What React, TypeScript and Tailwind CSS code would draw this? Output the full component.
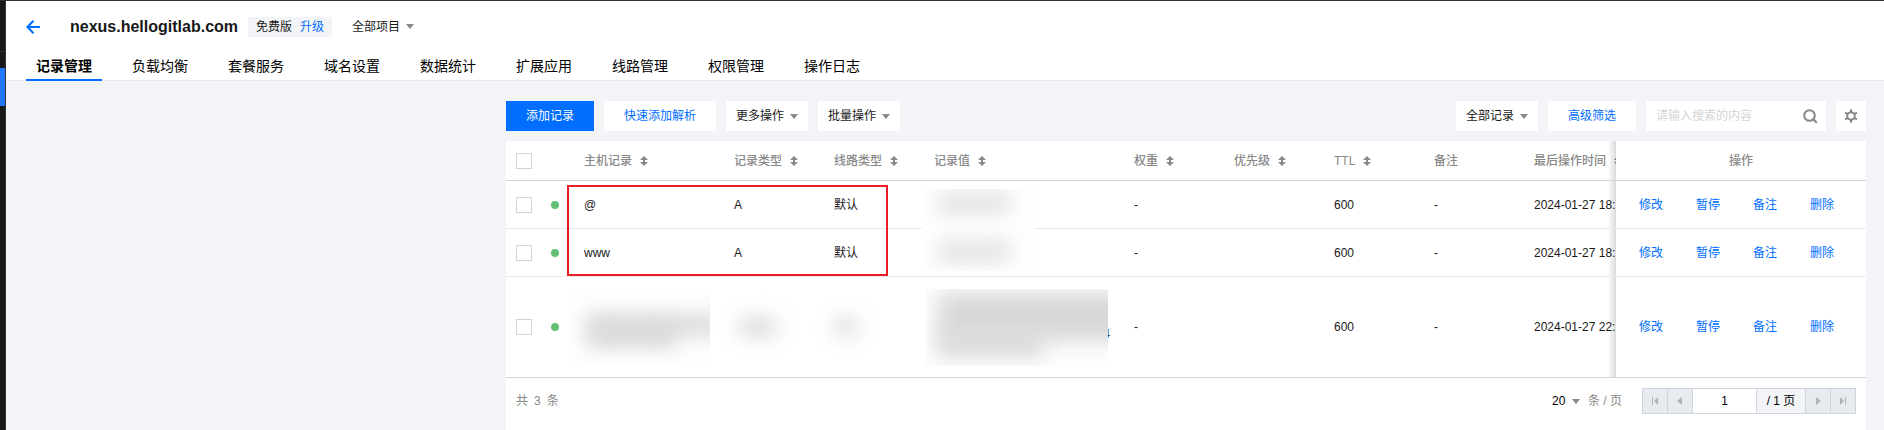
import type { ReactNode } from "react";

// ─── Types ────────────────────────────────────────────────────────────────────
interface Column {
  label: string;
  sortable: boolean;
}

interface DnsRecord {
  id: string;
  host: string;
  type: string;
  line: string;
  weight: string;
  priority: string;
  ttl: string;
  remark: string;
  updatedAt: string;
  masked: boolean;
}

// ─── Data ─────────────────────────────────────────────────────────────────────
const TABS = [
  "记录管理",
  "负载均衡",
  "套餐服务",
  "域名设置",
  "数据统计",
  "扩展应用",
  "线路管理",
  "权限管理",
  "操作日志",
];

const COLUMNS: Column[] = [
  { label: "主机记录", sortable: true },
  { label: "记录类型", sortable: true },
  { label: "线路类型", sortable: true },
  { label: "记录值", sortable: true },
  { label: "权重", sortable: true },
  { label: "优先级", sortable: true },
  { label: "TTL", sortable: true },
  { label: "备注", sortable: false },
  { label: "最后操作时间", sortable: true },
];

const RECORDS: DnsRecord[] = [
  {
    id: "r1",
    host: "@",
    type: "A",
    line: "默认",
    weight: "-",
    priority: "",
    ttl: "600",
    remark: "-",
    updatedAt: "2024-01-27 18:",
    masked: false,
  },
  {
    id: "r2",
    host: "www",
    type: "A",
    line: "默认",
    weight: "-",
    priority: "",
    ttl: "600",
    remark: "-",
    updatedAt: "2024-01-27 18:",
    masked: false,
  },
  {
    id: "r3",
    host: "",
    type: "",
    line: "",
    weight: "-",
    priority: "",
    ttl: "600",
    remark: "-",
    updatedAt: "2024-01-27 22:",
    masked: true,
  },
];

const ROW_ACTIONS = ["修改", "暂停", "备注", "删除"];

// ─── Icons ────────────────────────────────────────────────────────────────────
function Caret() {
  return (
    <svg width="8" height="5" viewBox="0 0 8 5" className="pointer-events-none shrink-0 fill-[#888888]">
      <path d="M0 0h8L4 5z" />
    </svg>
  );
}

function SortIcon() {
  return (
    <svg width="8" height="10" viewBox="0 0 8 10" className="shrink-0 fill-[#888888]">
      <path d="M4 0 8 4H5v2h3L4 10 0 6h3V4H0z" />
    </svg>
  );
}

function BackIcon() {
  return (
    <svg width="14" height="14" viewBox="0 0 14 14" fill="none" stroke="#006eff" strokeWidth="2">
      <path d="M7.5.8 1.4 7l6.1 6.2M1.5 7H14" />
    </svg>
  );
}

function SearchIcon() {
  return (
    <svg width="15" height="15" viewBox="0 0 15 15" fill="none" stroke="#888888" strokeWidth="2">
      <circle cx="6.5" cy="6.5" r="5.3" />
      <path d="m9.5 9.5 4.3 4.3" />
    </svg>
  );
}

function GearIcon() {
  return (
    <svg width="14" height="14" viewBox="0 0 14 14" fill="none" stroke="#888888" strokeWidth="2">
      <path d="M7 2.8 10.6 4.9v4.2L7 11.2 3.4 9.1V4.9z" />
      <path d="M7 .2v2.6M7 11.2v2.6M10.6 4.9l2.4-1.2M10.6 9.1l2.4 1.2M3.4 9.1 1 10.3M3.4 4.9 1 3.7" />
    </svg>
  );
}

function PagerIcon({ d }: { d: string }) {
  return (
    <svg width="8" height="8" viewBox="0 0 8 8" className="fill-[#b0b4ba]">
      <path d={d} />
    </svg>
  );
}

// ─── Small parts ──────────────────────────────────────────────────────────────
function MenuButton({ children }: { children: ReactNode }) {
  return (
    <button className="flex h-[30px] w-[82px] items-center justify-center gap-1.5 bg-white">
      {children}
      <Caret />
    </button>
  );
}

function Checkbox({ label }: { label: string }) {
  return (
    <input
      type="checkbox"
      aria-label={label}
      className="block size-4 appearance-none border border-[#cfd5de] bg-white checked:bg-[#006eff]"
    />
  );
}

function PagerButton({ label, d }: { label: string; d: string }) {
  return (
    <button
      aria-label={label}
      className="flex w-[25px] items-center justify-center border-r border-[#cfd5de] bg-[#e7eaef]"
    >
      <PagerIcon d={d} />
    </button>
  );
}

// ─── Redacted cell contents ───────────────────────────────────────────────────
function MaskedHost() {
  return (
    <div className="relative -ml-4 h-[72px] w-[142px] overflow-hidden bg-[#fefefe]">
      <div className="absolute top-6 left-5 h-5 w-36 bg-[#d8d8d8] blur-[10px]" />
      <div className="absolute top-8 left-5 h-6 w-22 bg-[#d8d8d8] blur-[10px]" />
    </div>
  );
}

function MaskedShort({ wide }: { wide?: boolean }) {
  return <div className={`h-5 rounded-full bg-[#dadada] blur-[10px] ${wide ? "ml-1 w-10" : "w-6"}`} />;
}

function MaskedValue() {
  return (
    <div className="relative -ml-2 w-[184px]">
      <span className="absolute top-9 right-0">4</span>
      <div className="relative h-[77px] w-[182px] overflow-hidden bg-[#fdfdfd]">
        <div className="absolute top-1 left-3 h-12 w-48 bg-[#d8d8d8] blur-[10px]" />
        <div className="absolute top-10 left-3 h-7 w-26 bg-[#dadada] blur-[10px]" />
      </div>
    </div>
  );
}

function MaskedPair() {
  return (
    <div className="absolute top-2 -left-0.5 z-10 h-[82px] w-[114px] overflow-hidden bg-[#fefefe]">
      <div className="absolute top-1 left-4 h-5 w-18 bg-[#e0e0e0] blur-[10px]" />
      <div className="absolute top-13 left-4 h-5 w-18 bg-[#e0e0e0] blur-[10px]" />
    </div>
  );
}

// ─── Header ───────────────────────────────────────────────────────────────────
function DomainHeader() {
  return (
    <header className="border-b border-[#e5e8ed] bg-white pl-5">
      <div className="flex h-[51px] items-center">
        <button aria-label="返回">
          <BackIcon />
        </button>
        <h1 className="ml-[30px] text-base leading-5 font-bold">nexus.hellogitlab.com</h1>
        <div className="ml-2.5 flex h-5 items-center gap-2 bg-[#f3f4f7] px-2">
          <span>免费版</span>
          <a href="#upgrade" className="text-[#006eff]">
            升级
          </a>
        </div>
        <button className="ml-5 flex items-center gap-1.5">
          全部项目
          <Caret />
        </button>
      </div>
      <nav className="-mb-px flex gap-5 text-sm leading-5 text-black">
        {TABS.map((tab, i) => (
          <a
            key={tab}
            href={`#tab-${i}`}
            className={`border-b-2 px-2.5 pt-1 pb-[3px] ${
              i === 0 ? "border-[#006eff] font-bold" : "border-transparent"
            }`}
          >
            {tab}
          </a>
        ))}
      </nav>
    </header>
  );
}

// ─── Toolbar ──────────────────────────────────────────────────────────────────
function Toolbar() {
  return (
    <div className="flex items-center gap-2.5">
      <button className="h-[30px] w-[88px] bg-[#006eff] text-white">添加记录</button>
      <button className="h-[30px] w-28 bg-white text-[#006eff]">快速添加解析</button>
      <MenuButton>更多操作</MenuButton>
      <MenuButton>批量操作</MenuButton>
      <div className="ml-auto flex gap-2.5">
        <MenuButton>全部记录</MenuButton>
        <button className="h-[30px] w-[88px] bg-white text-[#006eff]">高级筛选</button>
        <div className="flex h-[30px] w-[180px] items-center bg-white pr-2 pl-2.5">
          <input
            aria-label="搜索"
            placeholder="请输入搜索的内容"
            className="min-w-0 flex-1 outline-none placeholder:text-[#d5d5d5]"
          />
          <button aria-label="搜索记录">
            <SearchIcon />
          </button>
        </div>
        <button aria-label="设置" className="flex size-[30px] items-center justify-center bg-white">
          <GearIcon />
        </button>
      </div>
    </div>
  );
}

// ─── Table ────────────────────────────────────────────────────────────────────
const STICKY =
  "sticky right-0 z-20 bg-white before:absolute before:inset-y-0 before:-left-2 before:w-2 before:bg-linear-to-l before:from-black/15 before:to-transparent";

function RecordRow({ record, index }: { record: DnsRecord; index: number }) {
  const last = index === RECORDS.length - 1;
  const cell = `border-b px-2.5 ${last ? "border-[#cfd5de]" : "border-[#e5e8ed]"}`;

  return (
    <tr className={last ? "h-[101px]" : "h-12"}>
      <td className={cell}>
        <Checkbox label={`选择记录 ${index + 1}`} />
      </td>
      <td className={cell}>
        <span className="-ml-px block size-2 rounded-full bg-[#61c073]" />
      </td>
      <td className={cell}>{record.masked ? <MaskedHost /> : record.host}</td>
      <td className={cell}>{record.masked ? <MaskedShort wide /> : record.type}</td>
      <td className={cell}>{record.masked ? <MaskedShort /> : record.line}</td>
      <td className={`${cell} relative`}>
        {record.masked && <MaskedValue />}
        {index === 0 && <MaskedPair />}
      </td>
      <td className={cell}>{record.weight}</td>
      <td className={cell}>{record.priority}</td>
      <td className={cell}>{record.ttl}</td>
      <td className={cell}>{record.remark}</td>
      <td className={`${cell} whitespace-nowrap`}>{record.updatedAt}</td>
      <td className={`${cell} ${STICKY}`}>
        <div className="flex gap-[33px] pl-[13px] text-[#006eff]">
          {ROW_ACTIONS.map((action) => (
            <a key={action} href={`#${record.id}`}>
              {action}
            </a>
          ))}
        </div>
      </td>
    </tr>
  );
}

function RecordTable() {
  return (
    <div className="relative">
      <div className="overflow-x-auto [scrollbar-width:none]">
        <table className="w-full min-w-[1448px] table-fixed border-separate border-spacing-0 text-left">
          <colgroup>
            <col className="w-9" />
            <col className="w-8" />
            <col className="w-[150px]" />
            <col className="w-[100px]" />
            <col className="w-[100px]" />
            <col className="w-[200px]" />
            <col className="w-[100px]" />
            <col className="w-[100px]" />
            <col className="w-[100px]" />
            <col className="w-[100px]" />
            <col />
            <col className="w-[250px]" />
          </colgroup>
          <thead>
            <tr className="h-10 text-[#888888]">
              <th className="border-b border-[#cfd5de] px-2.5">
                <Checkbox label="全选" />
              </th>
              <th className="border-b border-[#cfd5de]" />
              {COLUMNS.map((col) => (
                <th key={col.label} className="border-b border-[#cfd5de] px-2.5 font-medium whitespace-nowrap">
                  <span className="flex items-center gap-2">
                    {col.label}
                    {col.sortable && <SortIcon />}
                  </span>
                </th>
              ))}
              <th className={`border-b border-[#cfd5de] px-2.5 text-center font-medium ${STICKY}`}>操作</th>
            </tr>
          </thead>
          <tbody>
            {RECORDS.map((record, i) => (
              <RecordRow key={record.id} record={record} index={i} />
            ))}
          </tbody>
        </table>
      </div>
      {/* highlight around the two new records */}
      <div className="pointer-events-none absolute top-11 left-[61px] h-[91px] w-[321px] border-2 border-[#ed1c24]" />
    </div>
  );
}

// ─── Pagination ───────────────────────────────────────────────────────────────
function Pagination() {
  return (
    <div className="flex items-center justify-between px-2.5 py-2.5">
      <div className="flex gap-1.5 text-[#888888]">
        <span>共</span>
        <span>3</span>
        <span>条</span>
      </div>
      <div className="flex items-center">
        <label className="mr-5 flex items-center text-[#888888]">
          <span className="relative mr-2 flex items-center">
            <select className="w-7 appearance-none bg-transparent text-black outline-none" defaultValue="20">
              <option value="20">20</option>
            </select>
            <span className="-ml-2">
              <Caret />
            </span>
          </span>
          条 / 页
        </label>
        <div className="flex h-[26px] border border-r-0 border-[#cfd5de]">
          <PagerButton label="第一页" d="M1 0h1v8H1zM7 0v8L3 4z" />
          <PagerButton label="上一页" d="M6 0v8L1 4z" />
          <input
            aria-label="页码"
            defaultValue="1"
            className="w-16 border-r border-[#cfd5de] text-center text-black outline-none"
          />
          <span className="flex w-[49px] items-center justify-center border-r border-[#cfd5de] bg-[#f3f4f7] text-black">
            / 1 页
          </span>
          <PagerButton label="下一页" d="M2 0v8l5-4z" />
          <PagerButton label="最后一页" d="M6 0h1v8H6zM1 0v8l4-4z" />
        </div>
      </div>
    </div>
  );
}

// ─── Page ─────────────────────────────────────────────────────────────────────
export default function App() {
  return (
    <div className="flex min-h-screen border-t border-[#333333] bg-[#f3f4f7] font-['Liberation_Sans','Noto_Sans_CJK_SC',sans-serif] text-xs leading-[18px] text-[#181818]">
      <aside className="w-1.5 shrink-0 border-r border-[#333333] bg-[#181818]">
        <div className="h-[67px] border-b border-[#181818] pt-[50px]">
          <div className="h-px bg-[#333333]" />
        </div>
        <div className="h-[38px] bg-[#2277ff]" />
      </aside>
      <div className="flex min-w-0 flex-1 flex-col">
        <DomainHeader />
        <main className="ml-[500px] flex flex-1 flex-col gap-2.5 pt-5 pr-[18px]">
          <Toolbar />
          <section className="flex-1 bg-white">
            <RecordTable />
            <Pagination />
          </section>
        </main>
      </div>
    </div>
  );
}
